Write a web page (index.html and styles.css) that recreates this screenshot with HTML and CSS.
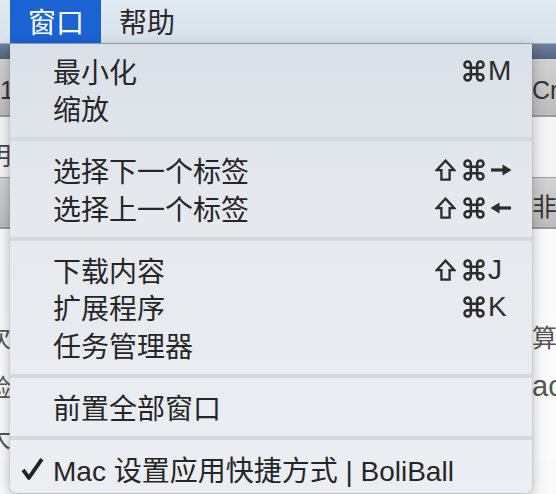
FILE: index.html
```html
<!DOCTYPE html>
<html lang="zh-CN">
<head>
    <meta charset="UTF-8">
    <title>窗口菜单</title>
    <link rel="stylesheet" href="styles.css">
</head>
<body>
    <svg width="0" height="0" class="defs">
        <defs>
            <symbol id="cmd" viewBox="1.6 1.6 20.8 20.8">
                <path d="M15 6v12a3 3 0 1 0 3-3H6a3 3 0 1 0 3 3V6a3 3 0 1 0-3 3h12a3 3 0 1 0-3-3" fill="none" stroke="currentColor" stroke-width="2.4"/>
            </symbol>
            <symbol id="shift" viewBox="0 0 21 22">
                <path d="M10.5 1.6 L19.4 11.2 H14.6 V20.6 H6.4 V11.2 H1.6 Z" fill="none" stroke="currentColor" stroke-width="2.3" stroke-linejoin="miter"/>
            </symbol>
            <symbol id="right" viewBox="0 0 22 14">
                <path d="M1 7 H14" stroke="currentColor" stroke-width="3.2"/>
                <path d="M12.5 1.5 L21.5 7 L12.5 12.5 Z" fill="currentColor"/>
            </symbol>
            <symbol id="left" viewBox="0 0 22 14">
                <path d="M8 7 H21" stroke="currentColor" stroke-width="3.2"/>
                <path d="M9.5 1.5 L0.5 7 L9.5 12.5 Z" fill="currentColor"/>
            </symbol>
            <symbol id="check" viewBox="0 0 24 25">
                <path d="M2.2 13.5 L8.2 21.8 L21.8 2.2" fill="none" stroke="currentColor" stroke-width="4" stroke-linejoin="round"/>
            </symbol>
        </defs>
    </svg>

    <div class="menubar">
        <span class="menu-title active">窗口</span>
        <span class="menu-title">帮助</span>
    </div>

    <div class="page">
        <div class="row toolbar"></div>
        <div class="row tab">
            <span class="left">1</span>
            <span class="right">Cmd</span>
        </div>
        <div class="row blank">
            <span class="left shift">明</span>
            <span class="right"></span>
        </div>
        <div class="row tab tab-low">
            <span class="left"></span>
            <span class="right">非流</span>
        </div>
        <div class="row body-text first">
            <span class="left shift">次</span>
            <span class="right">算</span>
        </div>
        <div class="row body-text">
            <span class="left shift">验</span>
            <span class="right latin">ac</span>
        </div>
        <div class="row body-text">
            <span class="left shift">大</span>
            <span class="right"></span>
        </div>
    </div>

    <div class="menu">
        <div class="item">
            <span class="label">最小化</span>
            <span class="shortcut">
                <span class="mods"><svg class="ic-cmd"><use href="#cmd"/></svg></span>
                <span class="key">M</span>
            </span>
        </div>
        <div class="item">
            <span class="label">缩放</span>
        </div>
        <div class="sep"></div>
        <div class="item">
            <span class="label">选择下一个标签</span>
            <span class="shortcut">
                <span class="mods"><svg class="ic-shift"><use href="#shift"/></svg><svg class="ic-cmd"><use href="#cmd"/></svg></span>
                <span class="key"><svg class="ic-arrow"><use href="#right"/></svg></span>
            </span>
        </div>
        <div class="item">
            <span class="label">选择上一个标签</span>
            <span class="shortcut">
                <span class="mods"><svg class="ic-shift"><use href="#shift"/></svg><svg class="ic-cmd"><use href="#cmd"/></svg></span>
                <span class="key"><svg class="ic-arrow"><use href="#left"/></svg></span>
            </span>
        </div>
        <div class="sep"></div>
        <div class="item">
            <span class="label">下载内容</span>
            <span class="shortcut">
                <span class="mods"><svg class="ic-shift"><use href="#shift"/></svg><svg class="ic-cmd"><use href="#cmd"/></svg></span>
                <span class="key">J</span>
            </span>
        </div>
        <div class="item">
            <span class="label">扩展程序</span>
            <span class="shortcut">
                <span class="mods"><svg class="ic-cmd"><use href="#cmd"/></svg></span>
                <span class="key">K</span>
            </span>
        </div>
        <div class="item">
            <span class="label">任务管理器</span>
        </div>
        <div class="sep"></div>
        <div class="item">
            <span class="label">前置全部窗口</span>
        </div>
        <div class="sep"></div>
        <div class="item checked">
            <span class="check"><svg class="ic-check"><use href="#check"/></svg></span>
            <span class="label">Mac 设置应用快捷方式 | BoliBall</span>
        </div>
    </div>
</body>
</html>
```

FILE: styles.css
```css
body {
    margin: 0;
    width: 556px;
    height: 494px;
    overflow: hidden;
    position: relative;
    background: #fafafa;
    font-family: "Liberation Sans", "Noto Sans CJK SC", sans-serif;
    color: #262626;
}
.defs {
    position: absolute;
}
.menubar {
    height: 44px;
    padding-left: 10px;
    display: flex;
    align-items: stretch;
    background: linear-gradient(180deg, #e2eaf1, #d7e2eb);
    border-bottom: 1px solid #a3b1bc;
    box-sizing: border-box;
}
.menu-title {
    display: flex;
    align-items: center;
    padding: 0 17px 2px 18px;
    font-size: 28px;
    color: #2a2a2a;
}
.menu-title.active {
    background: #1b62d3;
    color: #fff;
}

/* page behind the menu, only its edges show */
.page {
    font-size: 25px;
    color: #555;
}
.row {
    display: grid;
    grid-template-columns: 532px 1fr;
    align-items: center;
    overflow: hidden;
}
.row span {
    white-space: nowrap;
    overflow: hidden;
}
.row .shift {
    margin-left: -14px;
}
.toolbar {
    height: 15px;
    background: linear-gradient(180deg, #6b809a, #52667e);
}
.tab {
    height: 58px;
    padding-top: 6px;
    box-sizing: border-box;
    background: linear-gradient(180deg, #d2d2d2, #bcbcbc);
    border-bottom: 2px solid #9a9a9a;
    color: #333;
}
.tab-low {
    height: 52px;
    padding-top: 4px;
    border-top: 1px solid #a0a0a0;
}
.blank {
    height: 60px;
    padding-top: 14px;
    box-sizing: border-box;
    background: #f4f4f4;
    color: #444;
}
.body-text {
    height: 50px;
    background: #fbfbfb;
}
.body-text.first {
    margin-top: 82px;
}
.latin {
    font-size: 29px;
}

/* dropdown menu */
.menu {
    position: absolute;
    top: 44px;
    left: 10px;
    width: 522px;
    height: 449px;
    padding-top: 8px;
    box-sizing: border-box;
    background: linear-gradient(180deg, #d9e0e7 0%, #e5e9ee 35%, #ebeef2 100%);
    box-shadow: 0 4px 14px rgba(0, 0, 0, 0.28), 0 0 0 1px rgba(0, 0, 0, 0.06);
    border-radius: 0 0 7px 7px;
    font-size: 28px;
}
.item {
    height: 37.5px;
    display: flex;
    align-items: center;
    padding-left: 43px;
    color: #262626;
}
.label {
    flex: 1;
    white-space: nowrap;
}
.shortcut {
    display: flex;
    align-items: center;
    color: #2c2c2c;
}
.mods {
    display: flex;
    align-items: center;
    gap: 7px;
    margin-right: 3px;
}
.ic-cmd {
    width: 22px;
    height: 22px;
}
.ic-shift {
    width: 21px;
    height: 22px;
}
.key {
    display: flex;
    align-items: center;
    width: 44px;
    height: 32px;
    font-size: 28px;
}
.ic-arrow {
    width: 22px;
    height: 14px;
    margin-left: 2px;
}
.sep {
    height: 4px;
    margin: 10px 0 10.5px;
    background: #d3d9de;
}
.checked {
    padding-left: 11px;
}
.check {
    display: flex;
    align-items: center;
    width: 32px;
    color: #222;
}
.ic-check {
    width: 23px;
    height: 24px;
}
```
